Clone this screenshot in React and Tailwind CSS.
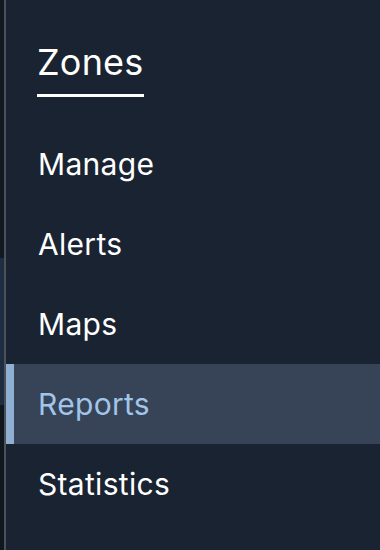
const items = ["Manage", "Alerts", "Maps", "Reports", "Statistics"];

const App = () => {
  const active = "Reports";

  return (
    <div
      className="flex h-[550px] w-[380px] overflow-hidden bg-[#1a2331]"
      style={{ fontFamily: "Inter, 'Noto Sans', sans-serif" }}
    >
      {/* page peeking out behind the panel */}
      <div className="flex w-[4px] shrink-0 flex-col">
        <div className="h-[258px] bg-[#111a21]" />
        <div className="h-[147px] bg-[#1f2d43]" />
        <div className="flex-1 bg-[#10181f]" />
      </div>
      <div className="w-[2px] shrink-0 bg-[#4b5157]" />

      <nav className="flex flex-1 flex-col">
        <div className="pl-[31px] pt-[44px]">
          <h2 className="inline-block border-b-[3px] border-white pb-[14px] text-[36px] leading-none font-normal tracking-[0.2px] text-white">
            Zones
          </h2>
        </div>

        <ul className="mt-[27px] flex flex-col">
          {items.map((item) => {
            const isActive = item === active;
            return (
              <li
                key={item}
                className={
                  isActive
                    ? "flex h-[80px] items-center border-l-[8px] border-[#8fb0d3] bg-[#374457] pl-[24px] pt-[1px] text-[30px] tracking-[0.3px] text-[#a2c5ea]"
                    : "flex h-[80px] items-center pl-[32px] pt-[1px] text-[30px] tracking-[0.3px] text-white"
                }
              >
                {item}
              </li>
            );
          })}
        </ul>
      </nav>
    </div>
  );
};

export default App;
